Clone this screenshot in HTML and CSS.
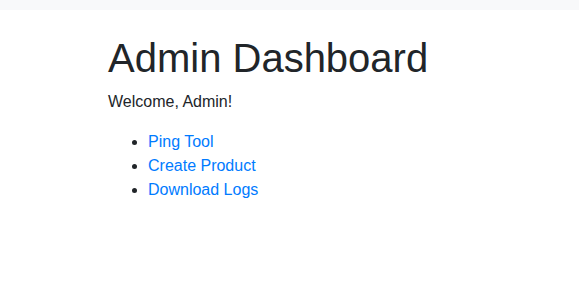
FILE: index.html
```html
<!DOCTYPE html>
<html lang="en">
<head>
  <meta charset="UTF-8">
  <meta name="viewport" content="width=device-width, initial-scale=1.0">
  <title>Admin Dashboard</title>
  <link rel="stylesheet" href="styles.css">
</head>
<body>
  <nav class="topbar"></nav>

  <div class="container">
    <h1>Admin Dashboard</h1>
    <p>Welcome, Admin!</p>
    <ul class="admin-links">
      <li><a href="#">Ping Tool</a></li>
      <li><a href="#">Create Product</a></li>
      <li><a href="#">Download Logs</a></li>
    </ul>
  </div>
</body>
</html>
```

FILE: styles.css
```css
body {
  font-family: "Liberation Sans", Arial, sans-serif;
  font-size: 16px;
  line-height: 1.5;
  color: #212529;
  background-color: #fff;
  margin: 0;
}
.topbar {
  background-color: #f8f9fa;
  height: 10px;
}
.container {
  padding: 24px 108px 0;
}
h1 {
  font-size: 40px;
  font-weight: 500;
  line-height: 1.2;
  margin: 0 0 8px;
}
p {
  margin: 0 0 16px;
}
.admin-links {
  margin: 0;
  padding-left: 40px;
}
.admin-links a {
  color: #007bff;
  text-decoration: none;
}
```
